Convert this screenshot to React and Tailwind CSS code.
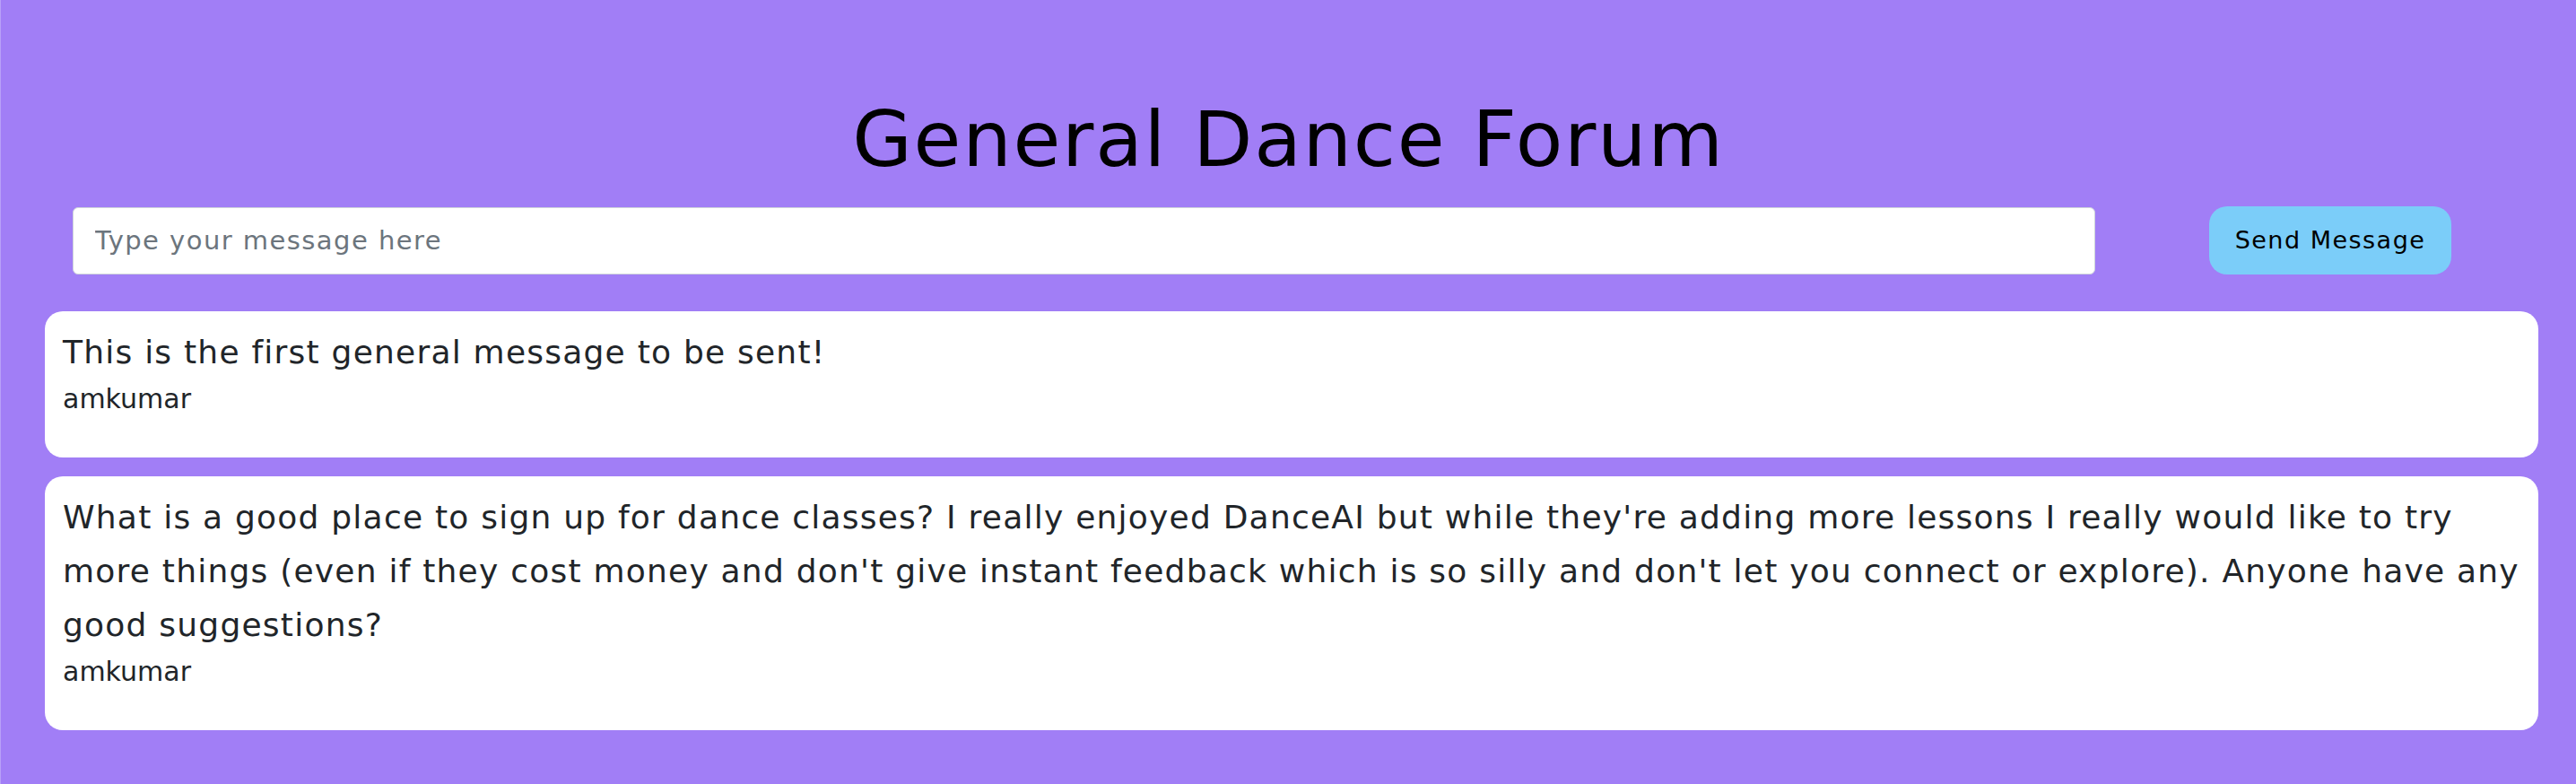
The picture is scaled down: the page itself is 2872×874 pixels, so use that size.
import React from 'react'

const messages = [
  {
    id: 1,
    text: 'This is the first general message to be sent!',
    user: 'amkumar',
  },
  {
    id: 2,
    text: "What is a good place to sign up for dance classes? I really enjoyed DanceAI but while they're adding more lessons I really would like to try more things (even if they cost money and don't give instant feedback which is so silly and don't let you connect or explore). Anyone have any good suggestions?",
    user: 'amkumar',
  },
]

function App() {
  const [message, setMessage] = React.useState('')

  return (
    <div className="min-h-screen bg-[#a17ef6] border-l border-[#b8a0f8] font-['DejaVu_Sans',sans-serif]">
      <h1 className="pt-[112px] text-center text-[86px] leading-none tracking-[0.02em] text-black">
        General Dance Forum
      </h1>

      <form
        className="mt-[32px] flex items-center gap-[127px] pl-[80px] pr-[139px]"
        onSubmit={(e) => e.preventDefault()}
      >
        <input
          type="text"
          className="flex-1 h-[75px] bg-white border border-[#ced4da] rounded-[6px] pl-[24px] text-[29px] tracking-[0.05em] text-[#212529] placeholder:text-[#6c757d] focus:outline-none"
          placeholder="Type your message here"
          value={message}
          onChange={(e) => setMessage(e.target.value)}
        />
        <button
          type="submit"
          className="w-[270px] h-[76px] bg-[#7bcdf9] rounded-[20px] text-[27px] tracking-[0.055em] text-black cursor-pointer"
        >
          Send Message
        </button>
      </form>

      <div className="mt-[41px] flex flex-col gap-[21px] pl-[49px] pr-[42px]">
        {messages.map((m) => (
          <div key={m.id} className="bg-white rounded-[20px] px-[20px] pt-[16px] pb-[44px] text-[#212529]">
            <p className="text-[36px] leading-[60px] tracking-[0.034em]">{m.text}</p>
            <p className="text-[30px] leading-[43px]">{m.user}</p>
          </div>
        ))}
      </div>
    </div>
  )
}

export default App
